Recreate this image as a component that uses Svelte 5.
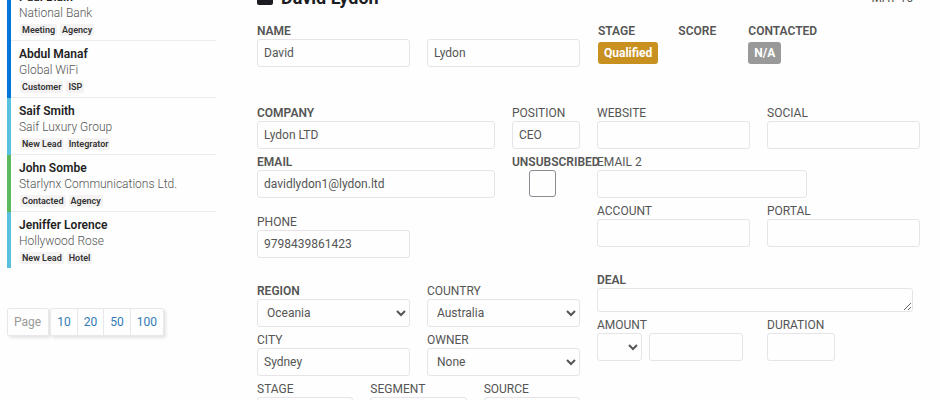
<script>
  let contacts = [
    { name: "Paul Blain", company: "National Bank", tags: ["Meeting", "Agency"], status: "meeting" },
    { name: "Abdul Manaf", company: "Global WiFi", tags: ["Customer", "ISP"], status: "meeting" },
    { name: "Saif Smith", company: "Saif Luxury Group", tags: ["New Lead", "Integrator"], status: "lead" },
    { name: "John Sombe", company: "Starlynx Communications Ltd.", tags: ["Contacted", "Agency"], status: "contacted" },
    { name: "Jeniffer Lorence", company: "Hollywood Rose", tags: ["New Lead", "Hotel"], status: "lead" },
  ];

  let pageSizes = [10, 20, 50, 100];

  let person = {
    first: "David",
    last: "Lydon",
    company: "Lydon LTD",
    position: "CEO",
    email: "davidlydon1@lydon.ltd",
    unsubscribed: false,
    phone: "9798439861423",
    region: "Oceania",
    country: "Australia",
    city: "Sydney",
    owner: "None",
  };
</script>

<div class="page">
  <aside>
    <ul class="contacts">
      {#each contacts as contact}
        <li class={contact.status}>
          <div class="info">
            <strong>{contact.name}</strong>
            <p>{contact.company}</p>
            <div class="tags">
              {#each contact.tags as tag}
                <span>{tag}</span>
              {/each}
            </div>
          </div>
        </li>
      {/each}
    </ul>

    <nav class="pager" aria-label="Page size">
      <span>Page</span>
      <div class="sizes">
        {#each pageSizes as size}
          <a href="#{size}">{size}</a>
        {/each}
      </div>
    </nav>
  </aside>

  <main>
    <header>
      <svg width="16" height="14" viewBox="0 0 16 14" aria-hidden="true">
        <circle cx="8" cy="3" r="3" />
        <path d="M0 14V8a2 2 0 0 1 2-2h12a2 2 0 0 1 2 2v4a2 2 0 0 1-2 2H2a2 2 0 0 1-2-2z" />
      </svg>
      <h1>{person.first} {person.last}</h1>
      <time>MAY 16</time>
    </header>

    <form>
      <section class="top">
        <div class="field w6">
          <label class="bold" for="first">NAME</label>
          <input id="first" type="text" bind:value={person.first} />
        </div>
        <div class="field w6 end">
          <input type="text" aria-label="Last name" bind:value={person.last} />
        </div>
      </section>

      <section class="top summary">
        <div>
          <h2>STAGE</h2>
          <span class="badge stage">Qualified</span>
        </div>
        <div class="score">
          <h2>SCORE</h2>
        </div>
        <div>
          <h2>CONTACTED</h2>
          <span class="badge">N/A</span>
        </div>
      </section>

      <section>
        <div class="field w9">
          <label class="bold" for="company">COMPANY</label>
          <input id="company" type="text" bind:value={person.company} />
        </div>
        <div class="field w3">
          <label for="position">POSITION</label>
          <input id="position" type="text" bind:value={person.position} />
        </div>
        <div class="field w9">
          <label class="bold" for="email">EMAIL</label>
          <input id="email" type="text" bind:value={person.email} />
        </div>
        <div class="field w3">
          <label class="bold" for="unsubscribed">UNSUBSCRIBED</label>
          <input id="unsubscribed" type="checkbox" bind:checked={person.unsubscribed} />
        </div>
        <div class="field w6 first phone">
          <label for="phone">PHONE</label>
          <input id="phone" type="text" bind:value={person.phone} />
        </div>
        <div class="field w6 first group">
          <label class="bold" for="region">REGION</label>
          <select id="region" bind:value={person.region}>
            <option>Oceania</option>
            <option>Europe</option>
          </select>
        </div>
        <div class="field w6 group">
          <label for="country">COUNTRY</label>
          <select id="country" bind:value={person.country}>
            <option>Australia</option>
            <option>New Zealand</option>
          </select>
        </div>
        <div class="field w6">
          <label for="city">CITY</label>
          <input id="city" type="text" bind:value={person.city} />
        </div>
        <div class="field w6">
          <label for="owner">OWNER</label>
          <select id="owner" bind:value={person.owner}>
            <option>None</option>
          </select>
        </div>
        <div class="field w4">
          <label for="stage">STAGE</label>
          <select id="stage"></select>
        </div>
        <div class="field w4">
          <label for="segment">SEGMENT</label>
          <select id="segment"></select>
        </div>
        <div class="field w4">
          <label for="source">SOURCE</label>
          <select id="source"></select>
        </div>
      </section>

      <section>
        <div class="field w6">
          <label for="website">WEBSITE</label>
          <input id="website" type="text" />
        </div>
        <div class="field w6">
          <label for="social">SOCIAL</label>
          <input id="social" type="text" />
        </div>
        <div class="field w8">
          <label for="email2">EMAIL 2</label>
          <input id="email2" type="text" />
        </div>
        <div class="field w6 first">
          <label for="account">ACCOUNT</label>
          <input id="account" type="text" />
        </div>
        <div class="field w6">
          <label for="portal">PORTAL</label>
          <input id="portal" type="text" />
        </div>
        <div class="field deal group">
          <label class="bold" for="deal">DEAL</label>
          <textarea id="deal"></textarea>
        </div>
        <div class="field w6">
          <label for="amount">AMOUNT</label>
          <div class="amount">
            <select aria-label="Currency"></select>
            <input id="amount" type="text" />
          </div>
        </div>
        <div class="field w3">
          <label for="duration">DURATION</label>
          <input id="duration" type="text" />
        </div>
      </section>
    </form>
  </main>
</div>

<style>
  :global(body) {
    background: #fdfefd;
  }

  /* the view opens slightly scrolled, with the header row partly out of sight */
  .page {
    display: flex;
    gap: 41px;
    box-sizing: border-box;
    height: calc(100vh + 16px);
    margin-top: -16px;
    padding: 0 20px 0 7px;
    overflow: hidden;
    font-family: Roboto, "Liberation Sans", sans-serif;
    font-size: 12px;
    color: #555;
  }

  aside {
    flex: 0 0 209px;
  }

  .contacts {
    list-style: none;
    margin: 0;
    padding: 0;
  }

  li {
    border-left: 4px solid #5bc0de;
  }

  .meeting {
    border-color: #0275d8;
  }

  .contacted {
    border-color: #5cb85c;
  }

  .info {
    padding: 5px 0 4px 8px;
    border-bottom: 1px solid #ececec;
  }

  li:last-child .info {
    border-bottom: none;
  }

  strong {
    display: block;
    font-weight: 600;
    line-height: 16px;
    color: #222;
  }

  p {
    margin: 0;
    line-height: 17px;
    font-weight: 300;
    color: #555;
  }

  .tags {
    display: flex;
    gap: 3px;
    padding: 2px 0 0 1px;
  }

  .tags span {
    padding: 0 2px;
    border-radius: 2px;
    background: #f4f2f3;
    font-size: 9px;
    font-weight: 600;
    line-height: 12px;
    color: #333;
  }

  .pager {
    display: flex;
    gap: 1px;
    width: max-content;
    margin-top: 40px;
    line-height: 26px;
  }

  .pager > span,
  .sizes {
    border: 1px solid #e9e7e9;
    border-radius: 2px;
    box-shadow: 2px 2px 3px #e6e3e6;
  }

  .pager > span {
    padding: 0 7px 0 6px;
    color: #999;
  }

  .sizes {
    display: flex;
    background: #fdfefd;
  }

  .sizes a {
    padding: 0 6px;
    color: #337ab7;
    text-decoration: none;
  }

  .sizes a + a {
    border-left: 1px solid #e9e7e9;
  }

  main {
    flex: 1;
    min-width: 0;
  }

  header {
    display: flex;
    align-items: center;
    gap: 8px;
    margin-bottom: 11px;
    padding-right: 7px;
    line-height: 28px;
  }

  header svg {
    fill: #1c1c22;
  }

  h1 {
    flex: 1;
    margin: 0;
    font-size: 18px;
    color: #1c1c22;
  }

  form {
    display: grid;
    grid-template-columns: 1fr 1fr;
    column-gap: 17px;
  }

  section {
    display: grid;
    grid-template-columns: repeat(12, 1fr);
    gap: 5px 17px;
    align-content: start;
  }

  .top {
    margin-bottom: 38px;
  }

  .summary {
    display: flex;
    gap: 20px;
    padding-left: 1px;
  }

  .score {
    min-width: 50px;
  }

  h2 {
    margin: 0 0 3px;
    font-size: 12px;
    font-weight: 600;
    line-height: 16px;
  }

  .badge {
    display: block;
    width: max-content;
    padding: 0 6px;
    border-radius: 3px;
    background: #999;
    font-weight: 700;
    line-height: 22px;
    color: #fff;
  }

  .badge.stage {
    background: #c8901f;
  }

  .field {
    display: flex;
    flex-direction: column;
    min-width: 0;
  }

  .w3 {
    grid-column: span 3;
  }

  .w4 {
    grid-column: span 4;
  }

  .w6 {
    grid-column: span 6;
  }

  .w8 {
    grid-column: span 8;
  }

  .w9 {
    grid-column: span 9;
  }

  .first {
    grid-column: 1 / span 6;
  }

  .end {
    justify-content: flex-end;
  }

  .phone {
    margin-top: 11px;
  }

  .group {
    margin-top: 20px;
  }

  .deal {
    grid-column: 1 / -1;
    margin-right: 7px;
  }

  label {
    line-height: 16px;
    white-space: nowrap;
  }

  .bold {
    font-weight: 600;
  }

  input,
  select,
  textarea {
    box-sizing: border-box;
    width: 100%;
    height: 28px;
    margin: 0;
    padding: 0 6px;
    border: 1px solid #e6e4e7;
    border-radius: 3px;
    background: #fdfefd;
    font: inherit;
    color: #555;
  }

  textarea {
    display: block;
    height: 24px;
  }

  select {
    padding: 0 0 0 5px;
  }

  input[type="checkbox"] {
    appearance: none;
    width: 27px;
    height: 27px;
    margin-left: 17px;
    padding: 0;
    border-color: #8e8a93;
  }

  .amount {
    display: flex;
    gap: 7px;
    padding-right: 7px;
  }

  .amount select {
    flex: 0 0 45px;
  }
</style>
